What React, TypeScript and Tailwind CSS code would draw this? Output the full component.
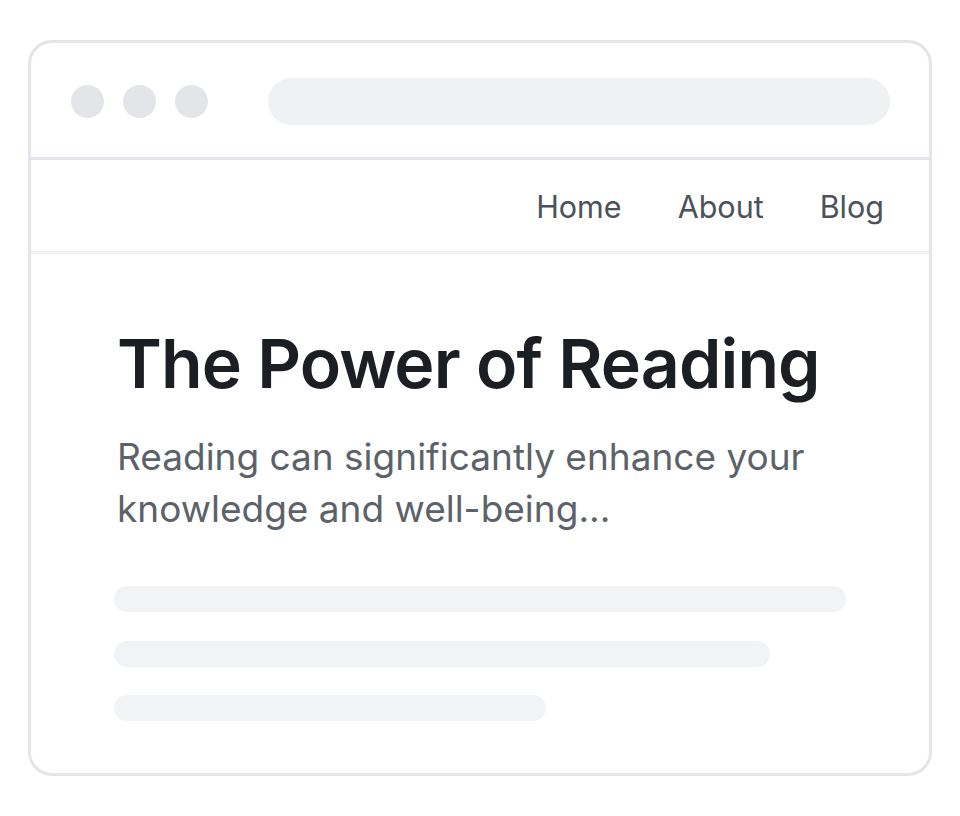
export default function App() {
  const bars = ["w-[732px]", "w-[656px]", "w-[432px]"];

  return (
    <div className="min-h-screen w-full bg-white font-['Inter',sans-serif] pt-[40px] pl-[28px]">
      <div className="w-[904px] h-[736px] rounded-[24px] border-[3px] border-[#e2e5e9] bg-white flex flex-col overflow-hidden">
        {/* window chrome */}
        <div className="h-[117px] border-b-[3px] border-[#e2e5e9] flex items-center pl-[40px] pr-[39px] pt-[2px]">
          <div className="flex gap-[19px]">
            <span className="w-[33px] h-[33px] rounded-full bg-[#e3e5e8]" />
            <span className="w-[33px] h-[33px] rounded-full bg-[#e3e5e8]" />
            <span className="w-[33px] h-[33px] rounded-full bg-[#e3e5e8]" />
          </div>
          <div className="ml-[60px] flex-1 h-[47px] rounded-full bg-[#f0f1f3]" />
        </div>

        {/* nav */}
        <nav className="h-[94px] border-b-[3px] border-[#eef0f2] flex items-center justify-end gap-[56px] pr-[45px] pt-[3px] text-[30.5px] text-[#4b5259]">
          <a>Home</a>
          <a>About</a>
          <a>Blog</a>
        </nav>

        {/* article */}
        <main className="pl-[86px] pt-[75px] flex flex-col">
          <h1 className="text-[68px] leading-none font-semibold tracking-[-0.9px] text-[#1b1e22]">
            The Power of Reading
          </h1>
          <p className="mt-[34px] w-[740px] text-[37px] leading-[52px] text-[#5b6269]">
            Reading can significantly enhance your knowledge and well-being...
          </p>
          <div className="mt-[51px] -ml-[3px] flex flex-col gap-[28.5px]">
            {bars.map((w, i) => (
              <div key={i} className={`${w} h-[26px] rounded-full bg-[#f2f3f5]`} />
            ))}
          </div>
        </main>
      </div>
    </div>
  );
}
